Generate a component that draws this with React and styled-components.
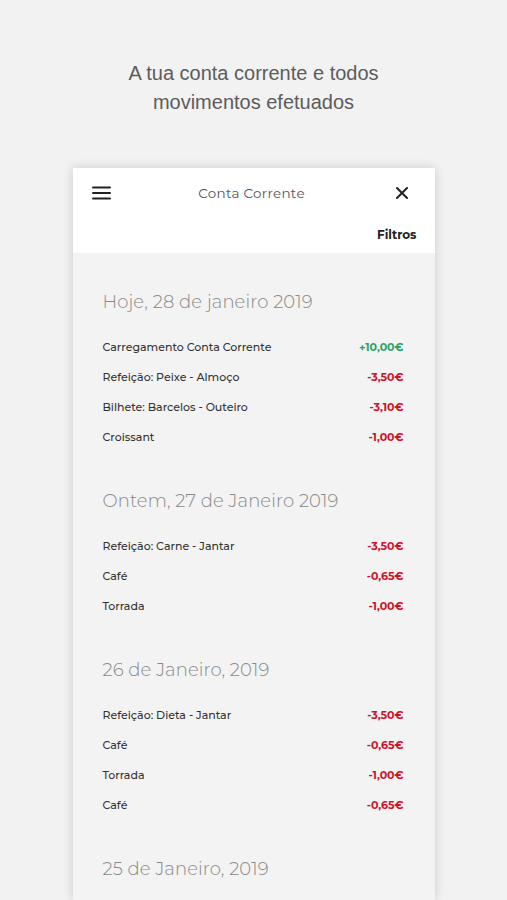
import React from "react";
import styled, { createGlobalStyle } from "styled-components";

const GlobalStyle = createGlobalStyle`
  html, body {
    margin: 0;
    padding: 0;
    background: #f2f2f2;
  }
  #root {
    height: 900px;
    overflow: hidden;
  }
`;

const sections = [
  {
    title: "Hoje, 28 de janeiro 2019",
    items: [
      { label: "Carregamento Conta Corrente", amount: "+10,00€", positive: true },
      { label: "Refeição: Peixe - Almoço", amount: "-3,50€" },
      { label: "Bilhete: Barcelos - Outeiro", amount: "-3,10€" },
      { label: "Croissant", amount: "-1,00€" },
    ],
  },
  {
    title: "Ontem, 27 de Janeiro 2019",
    items: [
      { label: "Refeição: Carne - Jantar", amount: "-3,50€" },
      { label: "Café", amount: "-0,65€" },
      { label: "Torrada", amount: "-1,00€" },
    ],
  },
  {
    title: "26 de Janeiro, 2019",
    items: [
      { label: "Refeição: Dieta - Jantar", amount: "-3,50€" },
      { label: "Café", amount: "-0,65€" },
      { label: "Torrada", amount: "-1,00€" },
      { label: "Café", amount: "-0,65€" },
    ],
  },
  {
    title: "25 de Janeiro, 2019",
    items: [],
  },
];

function App() {
  return (
    <Page>
      <GlobalStyle />
      <Intro>
        A tua conta corrente e todos
        <br />
        movimentos efetuados
      </Intro>
      <Card>
        <Header>
          <TopBar>
            <IconButton aria-label="menu">
              <svg width="19" height="14" viewBox="0 0 19 14">
                <rect x="0" y="0.5" width="19" height="2" rx="1" fill="#222" />
                <rect x="0" y="6" width="19" height="2" rx="1" fill="#222" />
                <rect x="0" y="11.5" width="19" height="2" rx="1" fill="#222" />
              </svg>
            </IconButton>
            <Title>Conta Corrente</Title>
            <IconButton aria-label="fechar">
              <svg width="12" height="12" viewBox="0 0 12 12">
                <path d="M1 1L11 11M11 1L1 11" stroke="#222" strokeWidth="2" strokeLinecap="round" />
              </svg>
            </IconButton>
          </TopBar>
          <FilterRow>
            <Filter>Filtros</Filter>
          </FilterRow>
        </Header>
        <Body>
          {sections.map((s) => (
            <Section key={s.title}>
              <DayTitle>{s.title}</DayTitle>
              {s.items.length > 0 && (
                <List>
                  {s.items.map((it, i) => (
                    <Row key={i}>
                      <Label>{it.label}</Label>
                      <Amount $positive={it.positive}>{it.amount}</Amount>
                    </Row>
                  ))}
                </List>
              )}
            </Section>
          ))}
        </Body>
      </Card>
    </Page>
  );
}

export default App;

const Page = styled.div`
  display: flex;
  flex-direction: column;
  align-items: center;
  padding-top: 59px;
  height: 900px;
  box-sizing: border-box;
`;

const Intro = styled.p`
  margin: 0;
  font-family: "Liberation Sans", Arial, sans-serif;
  font-size: 20px;
  line-height: 29px;
  color: #5c5c5c;
  text-align: center;
`;

const Card = styled.div`
  margin-top: 51px;
  width: 362px;
  flex: 1;
  background: #f3f3f3;
  box-shadow: 0 0 10px rgba(0, 0, 0, 0.16);
  display: flex;
  flex-direction: column;
  font-family: "Montserrat", "Noto Sans", sans-serif;
`;

const Header = styled.div`
  background: #fff;
  height: 85px;
  display: flex;
  flex-direction: column;
`;

const TopBar = styled.div`
  display: flex;
  align-items: center;
  justify-content: space-between;
  padding: 12px 23px 0 19px;
  height: 26px;
`;

const IconButton = styled.span`
  display: flex;
  align-items: center;
  justify-content: center;
  width: 19px;
  height: 19px;
`;

const Title = styled.div`
  font-size: 13.5px;
  font-weight: 400;
  color: #555;
  letter-spacing: 0.3px;
`;

const FilterRow = styled.div`
  display: flex;
  justify-content: flex-end;
  padding: 21px 18px 0 0;
`;

const Filter = styled.span`
  font-size: 12px;
  font-weight: 700;
  color: #222;
`;

const Body = styled.div`
  padding: 37px 31px 0 30px;
  display: flex;
  flex-direction: column;
  gap: 37px;
`;

const Section = styled.section`
  display: flex;
  flex-direction: column;
`;

const DayTitle = styled.h2`
  margin: 0;
  font-size: 18px;
  font-weight: 300;
  color: #888;
  line-height: 24px;
  letter-spacing: 0.1px;
`;

const List = styled.div`
  margin-top: 18px;
  display: flex;
  flex-direction: column;
`;

const Row = styled.div`
  display: flex;
  justify-content: space-between;
  align-items: center;
  height: 30px;
`;

const Label = styled.span`
  font-size: 11px;
  font-weight: 500;
  color: #333;
`;

const Amount = styled.span`
  font-size: 11px;
  font-weight: 700;
  color: ${(p) => (p.$positive ? "#2aa36b" : "#d0112b")};
`;
